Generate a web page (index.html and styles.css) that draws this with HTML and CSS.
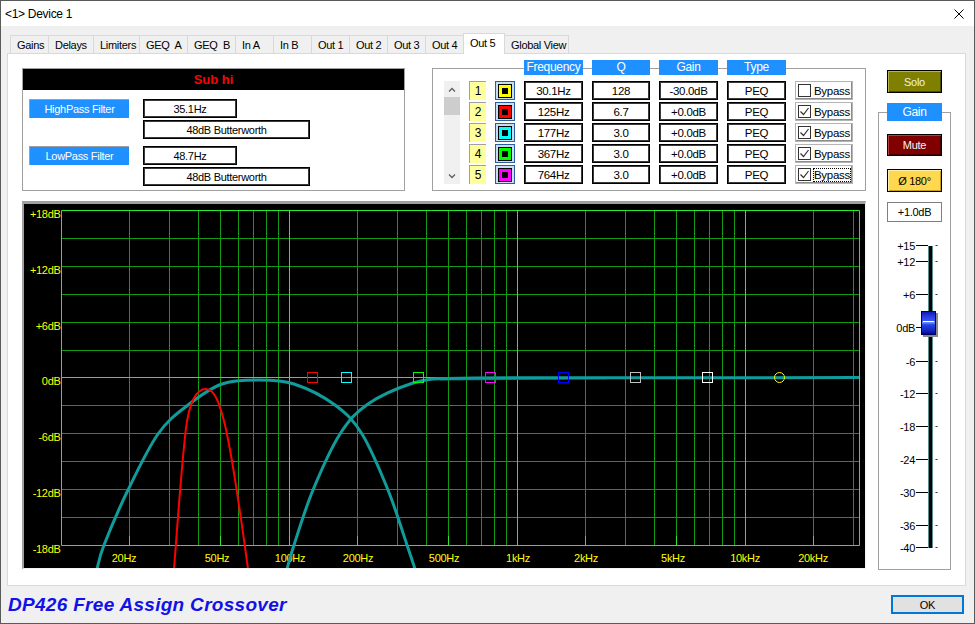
FILE: index.html
```html
<!DOCTYPE html>
<html lang="en">
<head>
    <meta charset="UTF-8">
    <title>Device 1</title>
    <link rel="stylesheet" href="styles.css">
</head>
<body>
<div class="window">
    <div class="titlebar">
        <span class="title">&lt;1&gt; Device 1</span>
        <svg class="close" width="10" height="10" viewBox="0 0 10 10"><path d="M0.5 0.5L9.5 9.5M9.5 0.5L0.5 9.5"/></svg>
    </div>

    <div class="tabs">
        <div class="tab">Gains</div>
        <div class="tab">Delays</div>
        <div class="tab">Limiters</div>
        <div class="tab">GEQ&nbsp; A</div>
        <div class="tab">GEQ&nbsp; B</div>
        <div class="tab">In A</div>
        <div class="tab">In B</div>
        <div class="tab">Out 1</div>
        <div class="tab">Out 2</div>
        <div class="tab">Out 3</div>
        <div class="tab">Out 4</div>
        <div class="tab active">Out 5</div>
        <div class="tab">Global View</div>
    </div>

    <div class="panel">
        <div class="main">
            <div class="top-row">
                <div class="filters">
                    <div class="out-name">Sub hi</div>
                    <div class="filter-body">
                        <div class="filter">
                            <div class="filter-label">HighPass Filter</div>
                            <div class="value freq">35.1Hz</div>
                            <div class="value slope">48dB Butterworth</div>
                        </div>
                        <div class="filter">
                            <div class="filter-label">LowPass Filter</div>
                            <div class="value freq">48.7Hz</div>
                            <div class="value slope">48dB Butterworth</div>
                        </div>
                    </div>
                </div>

                <div class="eq">
                    <div class="eq-head">
                        <span>Frequency</span>
                        <span>Q</span>
                        <span>Gain</span>
                        <span>Type</span>
                    </div>
                    <div class="eq-rows">
                        <div class="scroll">
                            <div class="arrow"><svg width="8" height="5" viewBox="0 0 8 5"><path d="M1 4.5L4 1.5L7 4.5"/></svg></div>
                            <div class="thumb"></div>
                            <div class="arrow down"><svg width="8" height="5" viewBox="0 0 8 5"><path d="M1 0.5L4 3.5L7 0.5"/></svg></div>
                        </div>

                        <div class="num">1</div>
                        <div class="swatch"><span class="dot b1"></span></div>
                        <div class="cell">30.1Hz</div>
                        <div class="cell">128</div>
                        <div class="cell">-30.0dB</div>
                        <div class="cell">PEQ</div>
                        <div class="bypass"><span class="check"></span><span class="lbl">Bypass</span></div>

                        <div class="num">2</div>
                        <div class="swatch"><span class="dot b2"></span></div>
                        <div class="cell">125Hz</div>
                        <div class="cell">6.7</div>
                        <div class="cell">+0.0dB</div>
                        <div class="cell">PEQ</div>
                        <div class="bypass"><span class="check"><svg width="11" height="11" viewBox="0 0 11 11"><path d="M1.5 5.5L4.5 8.5L9.5 2"/></svg></span><span class="lbl">Bypass</span></div>

                        <div class="num">3</div>
                        <div class="swatch"><span class="dot b3"></span></div>
                        <div class="cell">177Hz</div>
                        <div class="cell">3.0</div>
                        <div class="cell">+0.0dB</div>
                        <div class="cell">PEQ</div>
                        <div class="bypass"><span class="check"><svg width="11" height="11" viewBox="0 0 11 11"><path d="M1.5 5.5L4.5 8.5L9.5 2"/></svg></span><span class="lbl">Bypass</span></div>

                        <div class="num">4</div>
                        <div class="swatch"><span class="dot b4"></span></div>
                        <div class="cell">367Hz</div>
                        <div class="cell">3.0</div>
                        <div class="cell">+0.0dB</div>
                        <div class="cell">PEQ</div>
                        <div class="bypass"><span class="check"><svg width="11" height="11" viewBox="0 0 11 11"><path d="M1.5 5.5L4.5 8.5L9.5 2"/></svg></span><span class="lbl">Bypass</span></div>

                        <div class="num">5</div>
                        <div class="swatch"><span class="dot b5"></span></div>
                        <div class="cell">764Hz</div>
                        <div class="cell">3.0</div>
                        <div class="cell">+0.0dB</div>
                        <div class="cell">PEQ</div>
                        <div class="bypass focus"><span class="check"><svg width="11" height="11" viewBox="0 0 11 11"><path d="M1.5 5.5L4.5 8.5L9.5 2"/></svg></span><span class="lbl">Bypass</span></div>
                    </div>
                </div>
            </div>

            <div class="graph">
                <!-- plot uses screen coordinates, 10Hz..31.6kHz / +18..-18dB -->
                <svg class="plot" width="841" height="364" viewBox="24 204 841 364">
                    <path class="minor" d="M129.5 210.5V545.5M169.5 210.5V545.5M198.5 210.5V545.5M220.5 210.5V545.5M238.5 210.5V545.5M253.5 210.5V545.5M266.5 210.5V545.5M278.5 210.5V545.5M357.5 210.5V545.5M397.5 210.5V545.5M426.5 210.5V545.5M448.5 210.5V545.5M466.5 210.5V545.5M481.5 210.5V545.5M494.5 210.5V545.5M506.5 210.5V545.5M585.5 210.5V545.5M625.5 210.5V545.5M654.5 210.5V545.5M676.5 210.5V545.5M694.5 210.5V545.5M709.5 210.5V545.5M722.5 210.5V545.5M734.5 210.5V545.5M813.5 210.5V545.5M853.5 210.5V545.5M61.5 238.5H859.5M61.5 266.5H859.5M61.5 294.5H859.5M61.5 322.5H859.5M61.5 350.5H859.5M61.5 405.5H859.5M61.5 433.5H859.5M61.5 461.5H859.5M61.5 489.5H859.5M61.5 517.5H859.5"/>
                    <path class="major" d="M61.5 210.5V545.5M289.5 210.5V545.5M517.5 210.5V545.5M745.5 210.5V545.5M859.5 210.5V545.5M61.5 210.5H859.5M61.5 377.5H859.5M61.5 545.5H859.5M129.5 536V545M220.5 536V545M357.5 536V545M448.5 536V545M585.5 536V545M676.5 536V545M813.5 536V545"/>

                    <g class="ylabels">
                        <text x="60.5" y="217.5">+18dB</text>
                        <text x="60.5" y="273.5">+12dB</text>
                        <text x="60.5" y="329.5">+6dB</text>
                        <text x="60.5" y="384.5">0dB</text>
                        <text x="60.5" y="440.5">-6dB</text>
                        <text x="60.5" y="496.5">-12dB</text>
                        <text x="60.5" y="552.5">-18dB</text>
                    </g>
                    <g class="xlabels">
                        <text x="124" y="562">20Hz</text>
                        <text x="217" y="562">50Hz</text>
                        <text x="290" y="562">100Hz</text>
                        <text x="358" y="562">200Hz</text>
                        <text x="444" y="562">500Hz</text>
                        <text x="518" y="562">1kHz</text>
                        <text x="586" y="562">2kHz</text>
                        <text x="673" y="562">5kHz</text>
                        <text x="745" y="562">10kHz</text>
                        <text x="813" y="562">20kHz</text>
                    </g>

                    <path class="curve shadow" d="M440 379.5C500 379 560 378.6 607 378.2"/>
                    <path class="curve teal" d="M97 569C98.2 565 98.8 558.2 104 545C109.2 531.8 119 508.5 128 490C137 471.5 148 448.2 158 434C168 419.8 177.3 413.3 188 405C198.7 396.7 210.3 388.2 222 384C233.7 379.8 246 380 258 380C270 380 281.2 379.8 294 384C306.8 388.2 323.7 396.7 335 405C346.3 413.3 353.2 419.8 362 434C370.8 448.2 380.5 471.5 388 490C395.5 508.5 402.5 531.8 407 545C411.5 558.2 413.7 565 415 569"/>
                    <path class="curve teal" d="M287 569C288.2 565 289.7 558.2 294 545C298.3 531.8 305.3 508.5 313 490C320.7 471.5 330.8 448.3 340 434C349.2 419.7 355.8 412.5 368 404C380.2 395.5 399.8 387.3 413 383C426.2 378.8 435 378.6 447 378.5C470 378 500 377.8 540 377.8L859 377.6"/>
                    <path class="curve red" d="M174 569C176 545 181 470 186 428C190 398 198 389 206 389C215 389 220 405 225 425C232 455 240 510 248 569"/>

                    <g class="markers">
                        <rect x="307.5" y="372.5" width="10" height="10" stroke="#ff0000"/>
                        <rect x="341.5" y="372.5" width="10" height="10" stroke="#00ffff"/>
                        <rect x="413.5" y="372.5" width="10" height="10" stroke="#00ff00"/>
                        <rect x="485.5" y="372.5" width="10" height="10" stroke="#ff00ff"/>
                        <rect x="558.5" y="372.5" width="10" height="10" stroke="#0000ff"/>
                        <rect x="630.5" y="372.5" width="10" height="10" stroke="#c0c0c0"/>
                        <rect x="702.5" y="372.5" width="10" height="10" stroke="#ffffff"/>
                        <circle cx="779.5" cy="377.5" r="5" stroke="#ffff00"/>
                    </g>
                </svg>
            </div>
        </div>

        <div class="side">
            <button class="btn solo">Solo</button>
            <div class="gain-box">
                <div class="gain-title">Gain</div>
                <button class="btn mute">Mute</button>
                <button class="btn phase">Ø 180°</button>
                <div class="gain-value">+1.0dB</div>
                <svg class="fader" width="71" height="330" viewBox="879 232 71 330">
                    <defs>
                        <linearGradient id="knob" x1="0" y1="0" x2="0" y2="1">
                            <stop offset="0" stop-color="#0a18a8"/>
                            <stop offset="0.2" stop-color="#2838e0"/>
                            <stop offset="0.4" stop-color="#3454f4"/>
                            <stop offset="0.47" stop-color="#7090ff"/>
                            <stop offset="0.58" stop-color="#2444e4"/>
                            <stop offset="0.85" stop-color="#1020c0"/>
                            <stop offset="1" stop-color="#000088"/>
                        </linearGradient>
                    </defs>
                    <rect x="928" y="246" width="5" height="302" fill="#5a8e8e"/>
                    <rect x="929" y="246" width="3" height="302" fill="#050505"/>
                    <path class="ticks" d="M916 245.5H928M916 261.5H928M916 294.5H928M916 327.5H928M916 361.5H928M916 393.5H928M916 426.5H928M916 459.5H928M916 492.5H928M916 525.5H928M916 547.5H928"/>
                    <path class="dashes" d="M935.5 245.5H937.5M935.5 261.5H937.5M935.5 294.5H937.5M935.5 327.5H937.5M935.5 361.5H937.5M935.5 393.5H937.5M935.5 426.5H937.5M935.5 459.5H937.5M935.5 492.5H937.5M935.5 525.5H937.5M935.5 547.5H937.5"/>
                    <g class="scale">
                        <text x="915" y="249.5">+15</text>
                        <text x="915" y="265.5">+12</text>
                        <text x="915" y="298.5">+6</text>
                        <text x="915" y="331.5">0dB</text>
                        <text x="915" y="365.5">-6</text>
                        <text x="915" y="397.5">-12</text>
                        <text x="915" y="430.5">-18</text>
                        <text x="915" y="463.5">-24</text>
                        <text x="915" y="496.5">-30</text>
                        <text x="915" y="529.5">-36</text>
                        <text x="915" y="551.5">-40</text>
                    </g>
                    <rect x="923" y="313" width="15" height="24" fill="#8a8a8a"/>
                    <rect x="921.5" y="311.5" width="14" height="23" fill="url(#knob)" stroke="#00005a"/>
                    <path d="M923 321.5H934" stroke="#ffffff"/>
                </svg>
            </div>
        </div>
    </div>

    <div class="footer">
        <span class="product">DP426 Free Assign Crossover</span>
        <button class="ok">OK</button>
    </div>
</div>
</body>
</html>
```

FILE: styles.css
```css
:root {
    --blue: #1e90ff;
    --frame: #a0a0a0;
    --tab-line: #d9d9d9;
    --cols: 16px 17px 20px 59px 58px 59px 59px 58px;
}

body {
    margin: 0;
    background: #f0f0f0;
    font-family: "Liberation Sans", Arial, sans-serif;
    font-size: 11px;
    letter-spacing: -0.3px;
    color: #000;
}

button {
    font-family: inherit;
    font-size: 11px;
    letter-spacing: -0.3px;
    padding: 0;
    cursor: pointer;
}

.window {
    width: 975px;
    height: 624px;
    box-sizing: border-box;
    border: 1px solid #5a5a5a;
    display: flex;
    flex-direction: column;
}

.titlebar {
    height: 25px;
    flex: none;
    background: #fff;
    display: flex;
    align-items: center;
    justify-content: space-between;
    padding: 0 10px 0 4px;
    font-size: 12px;
}

.close path {
    stroke: #000;
    stroke-width: 1;
}

/* tab strip */
.tabs {
    height: 27px;
    flex: none;
    display: flex;
    align-items: flex-end;
    padding-left: 9px;
}

.tab {
    width: 39px;
    height: 18px;
    box-sizing: border-box;
    padding: 0 5px 0 6px;
    border: 1px solid var(--tab-line);
    border-bottom: 0;
    margin-right: -1px;
    display: flex;
    align-items: center;
    white-space: nowrap;
}

.tab:nth-child(2) { width: 46px; }
.tab:nth-child(3) { width: 47px; }
.tab:nth-child(4),
.tab:nth-child(5) { width: 49px; }
.tab:nth-child(13) { width: 65px; }

.tab.active {
    width: 42px;
    height: 21px;
    background: #fff;
    margin-bottom: -1px;
    padding-bottom: 2px;
    position: relative;
    z-index: 1;
}

.panel {
    flex: 1;
    margin: 0 8px 0 6px;
    background: #fff;
    border: 1px solid var(--tab-line);
    display: grid;
    grid-template-columns: 844px 73px;
    column-gap: 12px;
    align-content: start;
    padding: 14px 14px 0;
}

.top-row {
    display: flex;
    gap: 27px;
    height: 123px;
}

/* output filters */
.filters {
    width: 383px;
    box-sizing: border-box;
    border: 1px solid var(--frame);
}

.out-name {
    height: 21px;
    line-height: 21px;
    background: #000;
    color: #ff0000;
    font-weight: bold;
    font-size: 13px;
    letter-spacing: 0;
    text-align: center;
}

.filter-body {
    padding: 9px 0 0 6px;
    display: flex;
    flex-direction: column;
    gap: 7px;
}

.filter {
    display: grid;
    grid-template-columns: 100px 167px;
    grid-template-rows: 19px 19px;
    column-gap: 14px;
    row-gap: 2px;
}

.filter-label {
    background: var(--blue);
    color: #fff;
    border-top: 1px solid var(--frame);
    border-left: 1px solid var(--frame);
    display: flex;
    align-items: center;
    justify-content: center;
}

.value,
.cell {
    box-sizing: border-box;
    border: 1px solid #000;
    box-shadow: inset 0 0 0 1px #3a3a3a;
    background: #fff;
    display: flex;
    align-items: center;
    justify-content: center;
}

.value.freq {
    width: 94px;
}

.value.slope {
    grid-column: 2;
}

/* parametric eq */
.eq {
    width: 434px;
    box-sizing: border-box;
    border: 1px solid var(--frame);
    padding: 0 0 6px 11px;
}

.eq-head,
.eq-rows {
    display: grid;
    grid-template-columns: var(--cols);
    column-gap: 9px;
}

.eq-head {
    margin-top: -9px;
    height: 15px;
}

.eq-head span {
    background: var(--blue);
    color: #fff;
    text-align: center;
    line-height: 15px;
    font-size: 12px;
}

.eq-head span:first-child {
    grid-column: 4;
}

.eq-rows {
    margin-top: 6px;
    grid-auto-rows: 19px;
    row-gap: 2px;
}

.scroll {
    grid-column: 1;
    grid-row: 1 / span 5;
    background: #f0f0f0;
    display: flex;
    flex-direction: column;
}

.scroll .arrow {
    height: 16px;
    display: flex;
    align-items: center;
    justify-content: center;
}

.scroll .arrow.down {
    margin-top: auto;
}

.scroll path {
    fill: none;
    stroke: #606060;
    stroke-width: 1.3;
}

.thumb {
    height: 18px;
    background: #cdcdcd;
}

.num {
    background: #ffff9c;
    border-top: 1px solid var(--frame);
    border-left: 1px solid var(--frame);
    display: flex;
    align-items: center;
    justify-content: center;
    font-size: 12px;
}

.swatch {
    box-sizing: border-box;
    background: #c6ddf3;
    border: 1px solid #2a5e9e;
    display: flex;
    align-items: center;
    justify-content: center;
}

.dot {
    width: 14px;
    height: 14px;
    box-sizing: border-box;
    border: 1px solid #000;
    background: #000;
    box-shadow: inset 0 0 0 3px var(--c);
}

.b1 { --c: #ffff00; }
.b2 { --c: #ff0000; }
.b3 { --c: #00ffff; }
.b4 { --c: #00ff00; }
.b5 { --c: #ff00ff; }

.cell {
    font-size: 11.5px;
}

.bypass {
    box-sizing: border-box;
    background: #fdfdfd;
    border: 1px solid #b4b4b4;
    box-shadow: inset -1px -1px 0 #8c8c8c;
    display: flex;
    align-items: center;
    gap: 3px;
    padding-left: 2px;
    font-size: 11.5px;
}

.check {
    width: 13px;
    height: 13px;
    box-sizing: border-box;
    border: 1px solid #333;
    background: #fff;
    display: flex;
}

.check path {
    fill: none;
    stroke: #333;
    stroke-width: 1.2;
}

.bypass.focus .lbl {
    outline: 1px dotted #000;
    outline-offset: 0;
}

/* response graph */
.graph {
    margin-top: 10px;
    height: 368px;
    box-sizing: border-box;
    border-style: solid;
    border-width: 3px 1px 1px 2px;
    border-color: var(--frame) #f4f4f4 #f4f4f4 var(--frame);
    background: #000;
}

.plot {
    display: block;
}

.plot .minor {
    stroke: #129a12;
    stroke-width: 1;
}

.plot .major {
    stroke: #2ee82e;
    stroke-width: 1;
}

.plot text {
    fill: #ffff00;
    font-size: 11px;
    letter-spacing: -0.3px;
}

.ylabels text {
    text-anchor: end;
}

.xlabels text {
    text-anchor: middle;
}

.curve {
    fill: none;
}

.curve.teal {
    stroke: #119c9c;
    stroke-width: 3;
}

.curve.shadow {
    stroke: #0b6f6f;
    stroke-width: 2;
}

.curve.red {
    stroke: #ff0000;
    stroke-width: 2;
}

.markers rect,
.markers circle {
    fill: none;
    stroke-width: 1;
}

/* gain column */
.side {
    display: flex;
    flex-direction: column;
}

.btn {
    box-sizing: border-box;
    border: 1px solid #000;
    margin: 13px 8px 0;
}

.solo {
    height: 23px;
    margin: 2px 9px 0;
    background: #808000;
    color: #f0f0f0;
    box-shadow: inset 1px 1px 0 #b4b44a, inset -1px -1px 0 #4a4a00;
}

.gain-box {
    margin-top: 19px;
    height: 458px;
    box-sizing: border-box;
    border: 1px solid var(--frame);
    display: flex;
    flex-direction: column;
}

.gain-title {
    margin: -10px 8px 0;
    height: 18px;
    line-height: 18px;
    background: var(--blue);
    color: #fff;
    text-align: center;
    font-size: 12px;
}

.mute {
    height: 22px;
    background: #800000;
    color: #f4f4f4;
    box-shadow: inset 1px 1px 0 #b04040, inset -1px -1px 0 #400000;
}

.phase {
    height: 23px;
    background: #ffd850;
    color: #000;
    box-shadow: inset 1px 1px 0 #fff0a8, inset -1px -1px 0 #c8a020;
}

.gain-value {
    margin: 10px 8px 0;
    height: 20px;
    box-sizing: border-box;
    border: 1px solid #808080;
    display: flex;
    align-items: center;
    justify-content: center;
}

.fader {
    display: block;
    margin-top: 10px;
}

.fader .ticks {
    stroke: #000;
    stroke-width: 1;
}

.fader .dashes {
    stroke: #333;
    stroke-width: 1;
}

.fader text {
    text-anchor: end;
    font-size: 11px;
    letter-spacing: -0.3px;
    fill: #000;
}

/* footer */
.footer {
    height: 37px;
    flex: none;
    display: flex;
    align-items: center;
    justify-content: space-between;
    padding: 0 10px 0 7px;
}

.product {
    font-weight: bold;
    font-style: italic;
    font-size: 19px;
    letter-spacing: 0.3px;
    color: #1212e8;
}

.ok {
    width: 73px;
    height: 19px;
    box-sizing: border-box;
    background: #e1e1e1;
    border: 1px solid #0078d7;
    box-shadow: inset 0 0 0 1px #0078d7;
}
```
